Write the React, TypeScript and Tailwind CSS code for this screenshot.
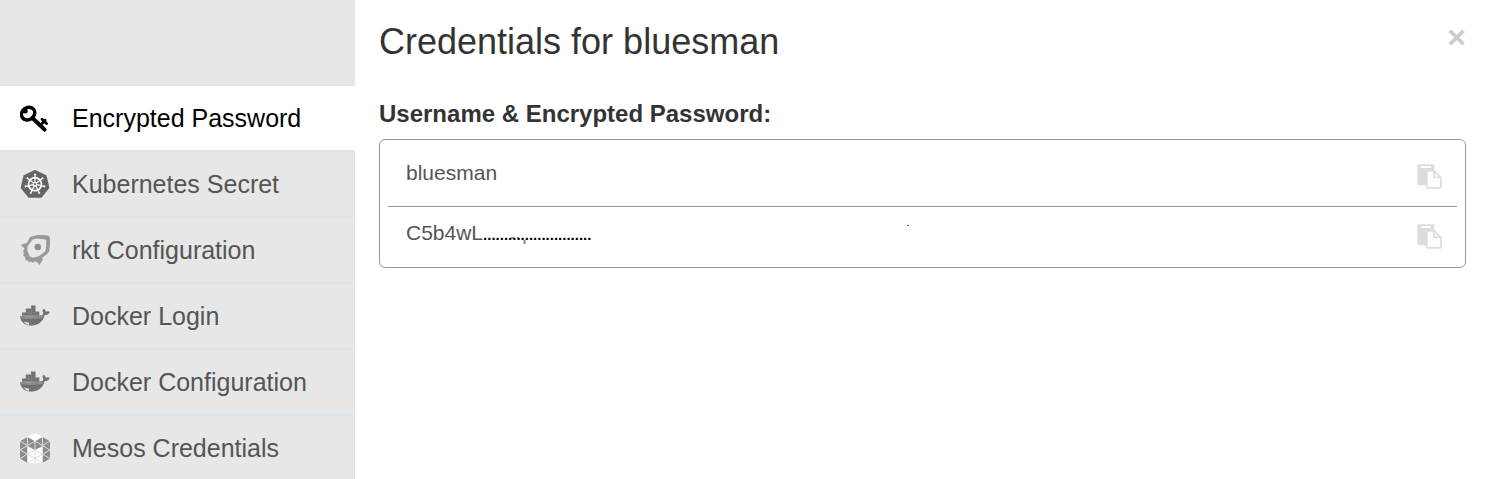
import React, { useState } from "react";

function KeyIcon() {
  return (
    <svg viewBox="0 0 30 30" className="size-[30px]" fill="none" stroke="currentColor" aria-hidden="true">
      <ellipse cx="8.1" cy="10.6" rx="7" ry="6" strokeWidth="3.4" transform="rotate(-38 8.1 10.6)" />
      <circle cx="5.2" cy="8" r="2.5" fill="currentColor" stroke="none" />
      <path d="M12.5 15 24.6 26.6" strokeWidth="4" strokeLinecap="round" />
      <path d="m20.6 22 4.6-4.8M22 16.3l4.6 4.2" strokeWidth="2.8" strokeLinecap="round" />
    </svg>
  );
}

function KubernetesIcon() {
  const spokes = [0, 51.43, 102.86, 154.29, 205.71, 257.14, 308.57];
  return (
    <svg viewBox="0 0 30 30" className="size-[30px]" aria-hidden="true">
      <path
        d="M15 1.7 25.9 6.9 28.6 18.7 21.1 28.1H8.9L1.4 18.7 4.1 6.9Z"
        fill="#646464"
        stroke="#646464"
        strokeWidth="1.4"
        strokeLinejoin="round"
      />
      <g stroke="white" fill="none">
        <circle cx="15" cy="15.2" r="6.5" strokeWidth="1.8" />
        {spokes.map((angle) => (
          <path key={angle} d="M15 13.4V4.8M14 5.4h2" strokeWidth="1.3" transform={`rotate(${angle} 15 15.2)`} />
        ))}
        <circle cx="15" cy="15.2" r="1.7" strokeWidth="1.2" />
      </g>
    </svg>
  );
}

function RktIcon() {
  return (
    <svg viewBox="0 0 30 30" className="size-[30px]" aria-hidden="true">
      <path
        d="M11.5 1.4Q20-.9 28.2.6q1.4.4 1.6 2 .7 7.4-.8 14-.5 1.5-1.8 2.3L22.4 22.6 22.6 25l-3.2 5-2.2-3-2.6-.4-1.6 1.2-2-1.2-2 1-1.3-2.2-2.5-.4.2-2.6L3 20.5l1-2.2-1-2.2 1.5-2.6L.7 10l6.3-2.2L9.8 2.6Z"
        fill="#9a9a9a"
      />
      <path
        d="m12.6 4.5 4.8-.9 7.9.9.9 1.1-.2 7.7-.8 3.1-6.4 4.8-5.6 1.6-3.4-1.4-2.6-6.1.6-4.1Z"
        fill="#e7e7e7"
      />
      <circle cx="17.8" cy="12" r="3.2" fill="#8c8c8c" />
    </svg>
  );
}

function DockerIcon() {
  return (
    <svg viewBox="0 0 30 30" className="size-[30px]" aria-hidden="true">
      <path d="M2 14.8v-3.4h3.8V7.6h5.1V4.5h4.6v6.1h3.8v4.2Z" fill="#727272" />
      <path d="M5.8 11.4h9.7M8.3 8v7M11.5 5v10M15.5 11v4" stroke="#848484" strokeWidth=".7" />
      <path
        d="M.2 15.1q11.5 1.1 20.6-.7 2.7-.5 2.6-2.4-1.7-2.2-.1-4.2 2.1.7 2.7 3 2-.9 3.8.1-1.2 3-5 3.2c-2 7-7.4 11-14.2 10.5C5 24.7.3 21 .2 15.1Z"
        fill="#707070"
      />
      <path d="M.5 15.4q11 1 21.2-.7l2.5-1.4-2 3.8q-10 1.5-21.2.2Z" fill="#8e8e8e" />
      <path d="M3.2 20.1q2.5 1.5 6 1.5l-.3 2.5q-3.6-.6-5.7-4Z" fill="#e2e2e2" />
    </svg>
  );
}

function MesosIcon() {
  return (
    <svg viewBox="0 0 30 30" className="size-[30px]" aria-hidden="true">
      <path d="M7.5 4 15 0l7.5 4L24 7v23H6V7Z" fill="white" />
      <path d="M0 8.2 7.5 4 15 8.2 22.5 4 30 8.2v17.3L22.5 30V13L15 17 7.5 13v17L0 25.5Z" fill="#8c8c8c" />
      <g stroke="#dedede" strokeWidth="1" fill="none">
        <path d="M7.5 4v26M15 8v22M22.5 4v26" />
        <path d="m0 8.2 7.5 4.3L15 8.2l7.5 4.3L30 8.2M0 17l7.5-4.5M0 17l7.5 4.2L15 17l7.5 4.2L30 17l-7.5-4.5M0 25.5l7.5-4.3 7.5 4.3 7.5-4.3 7.5 4.3M7.5 30l7.5-4.5 7.5 4.5" />
      </g>
    </svg>
  );
}

function PasteIcon() {
  return (
    <svg viewBox="0 0 26 26" className="size-[26px]" aria-hidden="true">
      <rect x=".4" y=".2" width="17" height="21" rx="1" fill="#dddddd" />
      <rect x="4" y="2" width="10" height="2" fill="white" />
      <path
        d="M10.8 6.8h6.4l6.8 7v9a1 1 0 0 1-1 1H10.8a1 1 0 0 1-1-1v-15a1 1 0 0 1 1-1Z"
        fill="white"
        stroke="#dddddd"
        strokeWidth="1.7"
      />
      <path d="M17 6.8v6.5h7" fill="none" stroke="#dddddd" strokeWidth="1.7" />
    </svg>
  );
}

const tabs = [
  { label: "Encrypted Password", Icon: KeyIcon },
  { label: "Kubernetes Secret", Icon: KubernetesIcon },
  { label: "rkt Configuration", Icon: RktIcon },
  { label: "Docker Login", Icon: DockerIcon },
  { label: "Docker Configuration", Icon: DockerIcon },
  { label: "Mesos Credentials", Icon: MesosIcon },
];

function CopyButton({ label, value }: { label: string; value: string }) {
  return (
    <button type="button" aria-label={label} onClick={() => navigator.clipboard?.writeText(value)}>
      <PasteIcon />
    </button>
  );
}

export default function App() {
  const [active, setActive] = useState(0);
  const username = "bluesman";
  const secret = "C5b4wL";
  const mask = "..........................";

  return (
    <div className="flex h-screen overflow-hidden bg-white font-['Liberation_Sans',Arial,sans-serif] text-[#333333]">
      <nav
        aria-label="Credential types"
        className="w-[355px] shrink-0 overflow-hidden bg-[#e7e7e7] pt-[84px]"
      >
        <ul>
          {tabs.map(({ label, Icon }, index) => (
            <li key={label}>
              <button
                type="button"
                aria-current={index === active ? "page" : undefined}
                onClick={() => setActive(index)}
                className={`flex h-[66px] w-full items-center gap-[22px] border-t-2 pl-5 text-left text-[25px] ${
                  index === active
                    ? "border-[#e3e7ea] bg-white text-black"
                    : "border-r border-[#d9e5ef] bg-[#e7e7e7] text-[#555555]"
                }`}
              >
                <Icon />
                <span className="pt-0.5">{label}</span>
              </button>
            </li>
          ))}
        </ul>
      </nav>

      <main className="min-w-0 flex-1 pr-5 pl-6">
        <header className="flex items-start justify-between pt-[22px]">
          <h1 className="text-[36px] leading-10">Credentials for {username}</h1>
          <button type="button" aria-label="Close" className="text-[32px] leading-[30px] font-bold text-[#cccccc]">
            ×
          </button>
        </header>
        <h2 className="mt-9 text-[24px] leading-8 font-bold">Username &amp; Encrypted Password:</h2>
        <section className="mt-[9px] rounded-md border border-[#999999] px-2 text-[21px] text-[#555555]">
          <div className="flex h-[67px] items-center justify-between border-b border-[#999999] pr-[14px] pl-[18px]">
            <span>{username}</span>
            <span className="flex pt-2">
              <CopyButton label="Copy username" value={username} />
            </span>
          </div>
          <div className="relative flex h-[60px] items-center justify-between pr-[14px] pl-[18px]">
            <span className="flex items-baseline pb-2">
              {secret}
              <span className="text-[15px] font-bold text-black">{mask}</span>
            </span>
            <svg
              viewBox="0 0 400 20"
              className="absolute top-[18px] left-[122px] h-5 w-[400px]"
              aria-hidden="true"
            >
              <path d="M1 13h3M7 13h2" stroke="#222222" />
              <path d="M14.5 15v4" stroke="#888888" strokeWidth="2" />
              <path d="M397 .5h2" stroke="#555555" />
            </svg>
            <CopyButton label="Copy encrypted password" value={secret} />
          </div>
        </section>
      </main>
    </div>
  );
}
